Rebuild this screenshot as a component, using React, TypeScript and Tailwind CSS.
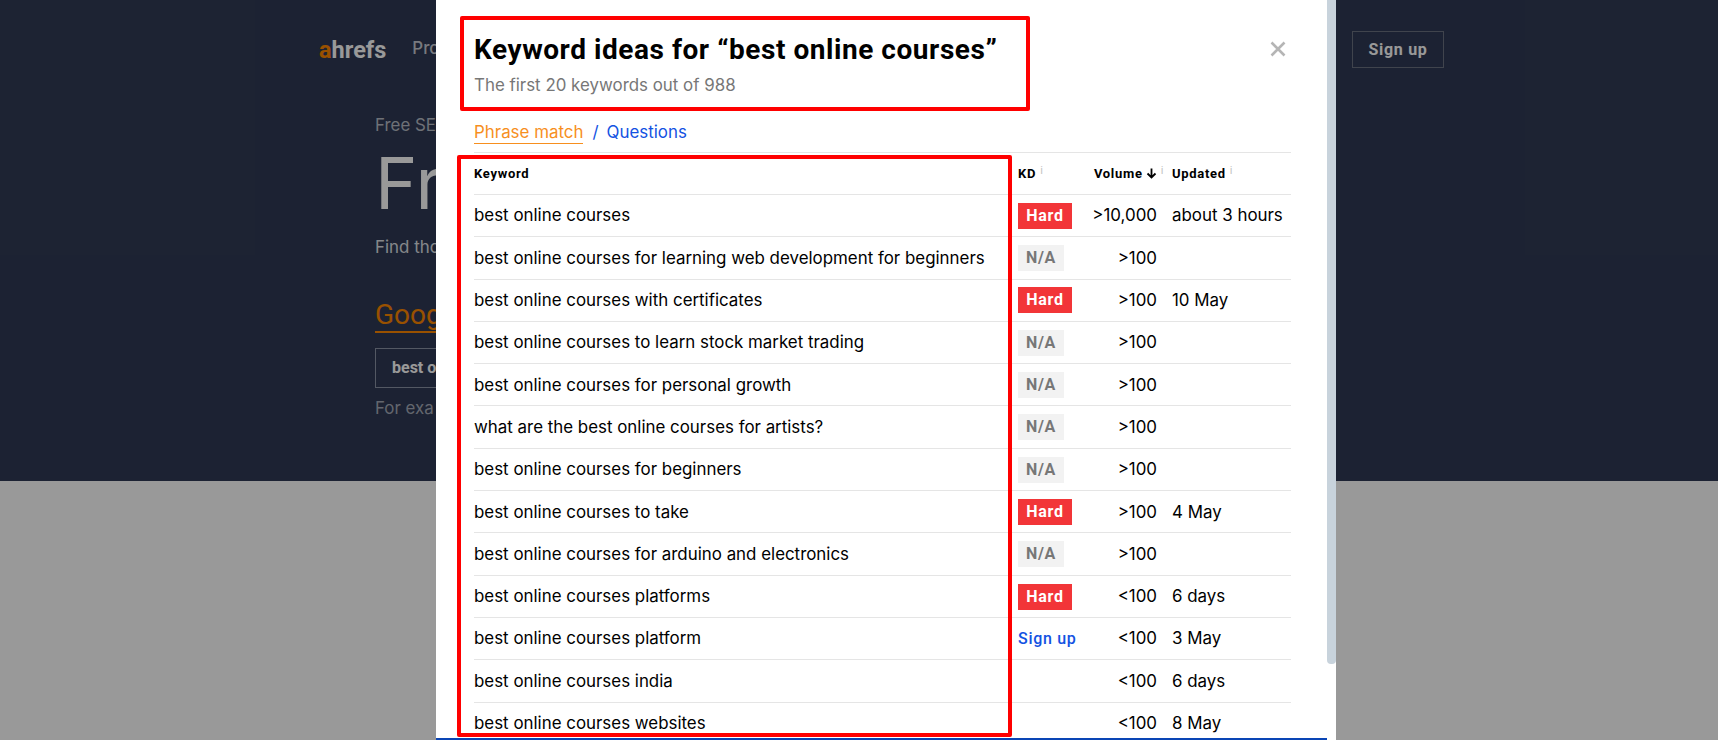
const rows = [
  { keyword: "best online courses", kd: "hard", volume: ">10,000", updated: "about 3 hours" },
  { keyword: "best online courses for learning web development for beginners", kd: "na", volume: ">100", updated: "" },
  { keyword: "best online courses with certificates", kd: "hard", volume: ">100", updated: "10 May" },
  { keyword: "best online courses to learn stock market trading", kd: "na", volume: ">100", updated: "" },
  { keyword: "best online courses for personal growth", kd: "na", volume: ">100", updated: "" },
  { keyword: "what are the best online courses for artists?", kd: "na", volume: ">100", updated: "" },
  { keyword: "best online courses for beginners", kd: "na", volume: ">100", updated: "" },
  { keyword: "best online courses to take", kd: "hard", volume: ">100", updated: "4 May" },
  { keyword: "best online courses for arduino and electronics", kd: "na", volume: ">100", updated: "" },
  { keyword: "best online courses platforms", kd: "hard", volume: "<100", updated: "6 days" },
  { keyword: "best online courses platform", kd: "signup", volume: "<100", updated: "3 May" },
  { keyword: "best online courses india", kd: "", volume: "<100", updated: "6 days" },
  { keyword: "best online courses websites", kd: "", volume: "<100", updated: "8 May" },
];

function Kd({ value }: { value: string }) {
  if (value === "hard")
    return <span className="inline-block h-[26px] w-[54px] bg-[#f23538] text-center align-middle font-['Roboto',sans-serif] font-bold text-[16px] leading-[26px] tracking-[0.7px] text-white">Hard</span>;
  if (value === "na")
    return <span className="inline-block h-[26px] w-[46px] bg-[#f2f2f2] text-center align-middle font-['Roboto',sans-serif] font-bold text-[16px] leading-[26px] tracking-[0.7px] text-[#777]">N/A</span>;
  if (value === "signup")
    return <a className="font-['Roboto',sans-serif] font-medium text-[16px] tracking-[0.7px] text-[#1352e2]">Sign up</a>;
  return null;
}

function Info({ className = "" }: { className?: string }) {
  return <span className={`ml-[4px] align-[4px] text-[11px] leading-none font-normal text-[#c4c4c4] ${className}`}>i</span>;
}

export default function App() {
  return (
    <div className="relative h-[740px] overflow-hidden bg-white font-['Inter',sans-serif] text-[16.9px]">
      {/* Page behind the modal */}
      <div className="h-[481px] bg-[#303a55]">
        <div className="flex items-center pl-[319px] pr-[274px] pt-[31px]">
          <span className="font-['Roboto',sans-serif] text-[23.5px] font-bold leading-[36px] text-white">
            <span className="text-[#ff8800]">a</span>hrefs
          </span>
          <span className="mb-[2px] ml-[26px] font-medium text-[#c9ccd4]">Pro</span>
          <a className="ml-auto flex h-[37px] w-[92px] items-center justify-center border border-[#6b7280] font-['Roboto',sans-serif] text-[16px] font-bold tracking-[0.7px] text-white">Sign up</a>
        </div>
        <div className="pl-[375px] pt-[45px]">
          <p className="leading-[24px] text-[#b8bcc6]">Free SE</p>
          <h1 className="mt-[1px] text-[72px] font-normal leading-[90px] text-white">Fr</h1>
          <p className="mt-[7px] leading-[24px] text-[#dfe1e6]">Find tho</p>
          <div className="mt-[40px] w-[200px] border-b-2 border-[#ff8800] font-['Roboto',sans-serif] text-[28px] leading-[32px] text-[#ff8800]">Goog</div>
          <div className="mt-[15px] h-[40px] w-[500px] border border-[#8a93a6] pl-[16px] font-['Roboto',sans-serif] text-[16px] font-bold leading-[38px] text-white">best o</div>
          <p className="mt-[8px] leading-[24px] text-[#a5abb8]">For exa</p>
        </div>
      </div>
      <div className="absolute inset-0 bg-black/40" />

      {/* Modal */}
      <div className="absolute inset-y-0 left-[436px] w-[900px] overflow-hidden bg-white pl-[38px] pr-[46px] text-black">
        <div className="flex items-start justify-between pt-[32px]">
          <div>
            <h2 className="font-['Roboto',sans-serif] text-[28px] font-bold leading-[36px] tracking-[0.55px]">Keyword ideas for “best online courses”</h2>
            <p className="mt-[5px] leading-[24px] text-[#777]">The first 20 keywords out of 988</p>
          </div>
          <svg className="mr-[4px] mt-[9px] h-[16px] w-[16px]" viewBox="0 0 16 16" fill="none" stroke="#b5b5b5" strokeWidth="2.6">
            <path d="M1.5 1.5l13 13M14.5 1.5l-13 13" />
          </svg>
        </div>
        <div className="mt-[23px] flex items-center leading-[24px]">
          <a className="border-b border-[#f78f1e] leading-[22px] text-[#f78f1e]">Phrase match</a>
          <span className="ml-[9px] text-[#1352e2]">/</span>
          <a className="ml-[8px] text-[#1352e2]">Questions</a>
        </div>
        <table className="mt-[8px] w-[817px] table-fixed border-t border-[#e5e5e5]">
          <colgroup>
            <col className="w-[544px]" />
            <col className="w-[61px]" />
            <col className="w-[78px]" />
            <col className="w-[134px]" />
          </colgroup>
          <thead>
            <tr className="h-[42px] border-b border-[#e5e5e5] font-['Roboto',sans-serif] text-[13px] font-bold tracking-[0.7px]">
              <th className="text-left">Keyword</th>
              <th className="text-left">KD<Info /></th>
              <th className="whitespace-nowrap text-right">
                Volume
                <svg className="ml-[3px] inline-block h-[11px] w-[11px] align-[-1px]" viewBox="0 0 11 11" fill="none" stroke="#000" strokeWidth="1.8">
                  <path d="M5.5 0.5v9M1.5 5.5l4 4 4-4" />
                </svg>
                <Info className="-mr-[7px]" />
              </th>
              <th className="pl-[15px] text-left">Updated<Info /></th>
            </tr>
          </thead>
          <tbody>
            {rows.map((row) => (
              <tr key={row.keyword} className="h-[42.3px] border-b border-[#e5e5e5]">
                <td className="pt-[1px]">{row.keyword}</td>
                <td><Kd value={row.kd} /></td>
                <td className="pt-[1px] text-right">{row.volume}</td>
                <td className="pl-[15px] pt-[1px]">{row.updated}</td>
              </tr>
            ))}
          </tbody>
        </table>
        {/* Scrollbar and bottom edge */}
        <div className="absolute right-0 top-0 h-[664px] w-[9px] rounded-b-[4px] bg-[#c8d3dc]" />
        <div className="absolute bottom-0 left-0 right-[9px] h-[2px] bg-[#0a45b5]" />
      </div>

      {/* Red annotation boxes */}
      <div className="absolute left-[460px] top-[16px] h-[95px] w-[570px] rounded-[2px] border-[4px] border-[#ff0000]" />
      <div className="absolute left-[457px] top-[155px] h-[582px] w-[555px] rounded-[2px] border-[4px] border-[#ff0000]" />
    </div>
  );
}
